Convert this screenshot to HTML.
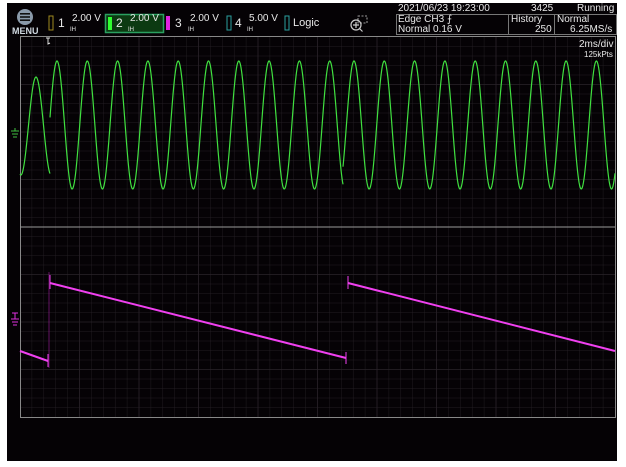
<!DOCTYPE html>
<html><head><meta charset="utf-8"><style>
body{margin:0;width:626px;height:467px;background:#fff;overflow:hidden;font-family:"Liberation Sans",sans-serif;}
#scr{position:absolute;left:7px;top:3px;width:610px;height:458px;background:#050205;}
.t{position:absolute;color:#e8e8e8;font-size:10px;line-height:10px;white-space:nowrap;}
</style></head><body>
<div id="scr"></div>
<svg width="626" height="467" style="position:absolute;left:0;top:0">
<circle cx="25" cy="17" r="8" fill="#8a9aaa"/>
<rect x="20" y="13" width="10" height="1.6" fill="#111"/><rect x="20" y="16.2" width="10" height="1.6" fill="#111"/><rect x="20" y="19.4" width="10" height="1.6" fill="#111"/>
<rect x="49" y="16" width="4" height="14" fill="none" stroke="#a08a20" stroke-width="1"/>
<rect x="105.5" y="14.5" width="58" height="18" fill="#0c3a12" stroke="#2aa060" stroke-width="1.5"/>
<rect x="108" y="17" width="4" height="13" fill="#30ff30"/>
<rect x="166" y="16" width="4" height="14" fill="#e020e0"/>
<rect x="227" y="16" width="4" height="14" fill="none" stroke="#2aa0a0" stroke-width="1"/>
<rect x="285" y="16" width="4" height="14" fill="none" stroke="#2aa0a0" stroke-width="1"/>
<circle cx="356" cy="25" r="5" fill="none" stroke="#ccc" stroke-width="1.2"/>
<path d="M353 25h6M356 22v6M359.5 28.5l3 3" stroke="#ccc" stroke-width="1.2"/>
<rect x="358" y="16" width="9" height="7" fill="none" stroke="#ccc" stroke-dasharray="2,1.5" stroke-width="0.8"/>
<rect x="396.5" y="14.5" width="112" height="20" fill="none" stroke="#777"/>
<rect x="508.5" y="14.5" width="46" height="20" fill="none" stroke="#777"/>
<rect x="554.5" y="14.5" width="62" height="20" fill="none" stroke="#777"/>
<g id="grid"></g>
<rect x="20.5" y="36.5" width="595" height="381" fill="none" stroke="#888" stroke-width="1"/>
<line x1="20" y1="227" x2="615" y2="227" stroke="#999" stroke-width="1"/>
<line x1="49" y1="272" x2="49" y2="368" stroke="#a020a0" stroke-width="0.6"/>
<path id="sine" fill="none" stroke="#40e040" stroke-width="1.2"/>
<path d="M20 351 L48 361 M50 283 L346 358 M348 283 L615 351" fill="none" stroke="#f040f0" stroke-width="2"/>
<path d="M48 354 V367 M50 275 V289 M346 352 V364 M348 276 V289" fill="none" stroke="#f040f0" stroke-width="1"/>
<path d="M11 131h8M12 134h6M13 137h4M15 128v3" stroke="#40c040" stroke-width="1" fill="none"/>
<path d="M11 319h8M12 322h6M13 325h4M15 316v3M12 313h6M15 313v6" stroke="#e030e0" stroke-width="1" fill="none"/>
<path d="M46 38h4M48 38v6l2 -1" stroke="#ddd" stroke-width="1" fill="none"/>
</svg>
<div class="t" style="left:12px;top:26px;font-size:9px;font-weight:bold;color:#cfd8e0">MENU</div>
<div class="t" style="left:58px;top:18px;font-size:12px">1</div>
<div class="t" style="left:72px;top:14px">2.00 V</div>
<div class="t" style="left:116px;top:18px;font-size:12px">2</div>
<div class="t" style="left:130px;top:14px">2.00 V</div>
<div class="t" style="left:175px;top:18px;font-size:12px">3</div>
<div class="t" style="left:190px;top:14px">2.00 V</div>
<div class="t" style="left:235px;top:18px;font-size:12px">4</div>
<div class="t" style="left:249px;top:14px">5.00 V</div>
<div class="t" style="left:293px;top:18px;font-size:11px">Logic</div>
<div class="t" style="left:70px;top:25px;font-size:6px">IH</div>
<div class="t" style="left:128px;top:25px;font-size:6px">IH</div>
<div class="t" style="left:188px;top:25px;font-size:6px">IH</div>
<div class="t" style="left:247px;top:25px;font-size:6px">IH</div>
<div class="t" style="left:398px;top:4px">2021/06/23 19:23:00</div>
<div class="t" style="left:531px;top:4px">3425</div>
<div class="t" style="left:577px;top:4px">Running</div>
<div class="t" style="left:398px;top:15px">Edge CH3 ⨍</div>
<div class="t" style="left:398px;top:25px">Normal 0.16 V</div>
<div class="t" style="left:511px;top:15px">History</div>
<div class="t" style="left:535px;top:25px">250</div>
<div class="t" style="left:557px;top:15px">Normal</div>
<div class="t" style="left:570px;top:25px">6.25MS/s</div>
<div class="t" style="left:579px;top:40px">2ms/div</div>
<div class="t" style="left:584px;top:50px;font-size:8px">125kPts</div>
<script>
var g=document.getElementById('grid'),s='';
for(var i=1;i<50;i++){var x=20+i*595/50;s+='<line x1="'+x+'" y1="37" x2="'+x+'" y2="417" stroke="#2a242a" stroke-width="'+(i%5==0?0.8:0.4)+'"/>';}
for(var j=1;j<40;j++){var y=37+j*380/40;s+='<line x1="20" y1="'+y+'" x2="615" y2="'+y+'" stroke="#2a242a" stroke-width="'+(j%5==0?0.8:0.4)+'"/>';}
g.innerHTML=s;
var P=30.3,d='';
function seg(a,b,pk,amp,c){for(var x=a;x<=b;x+=0.5){var y=c-amp*Math.cos(2*Math.PI*(x-pk)/P);d+=(x==a?'M':'L')+x.toFixed(1)+' '+y.toFixed(1);}}
seg(20,50,36,49,126);seg(50,343,57,64,125);seg(343,615,354,64,125);
document.getElementById('sine').setAttribute('d',d);
</script>
</body></html>
